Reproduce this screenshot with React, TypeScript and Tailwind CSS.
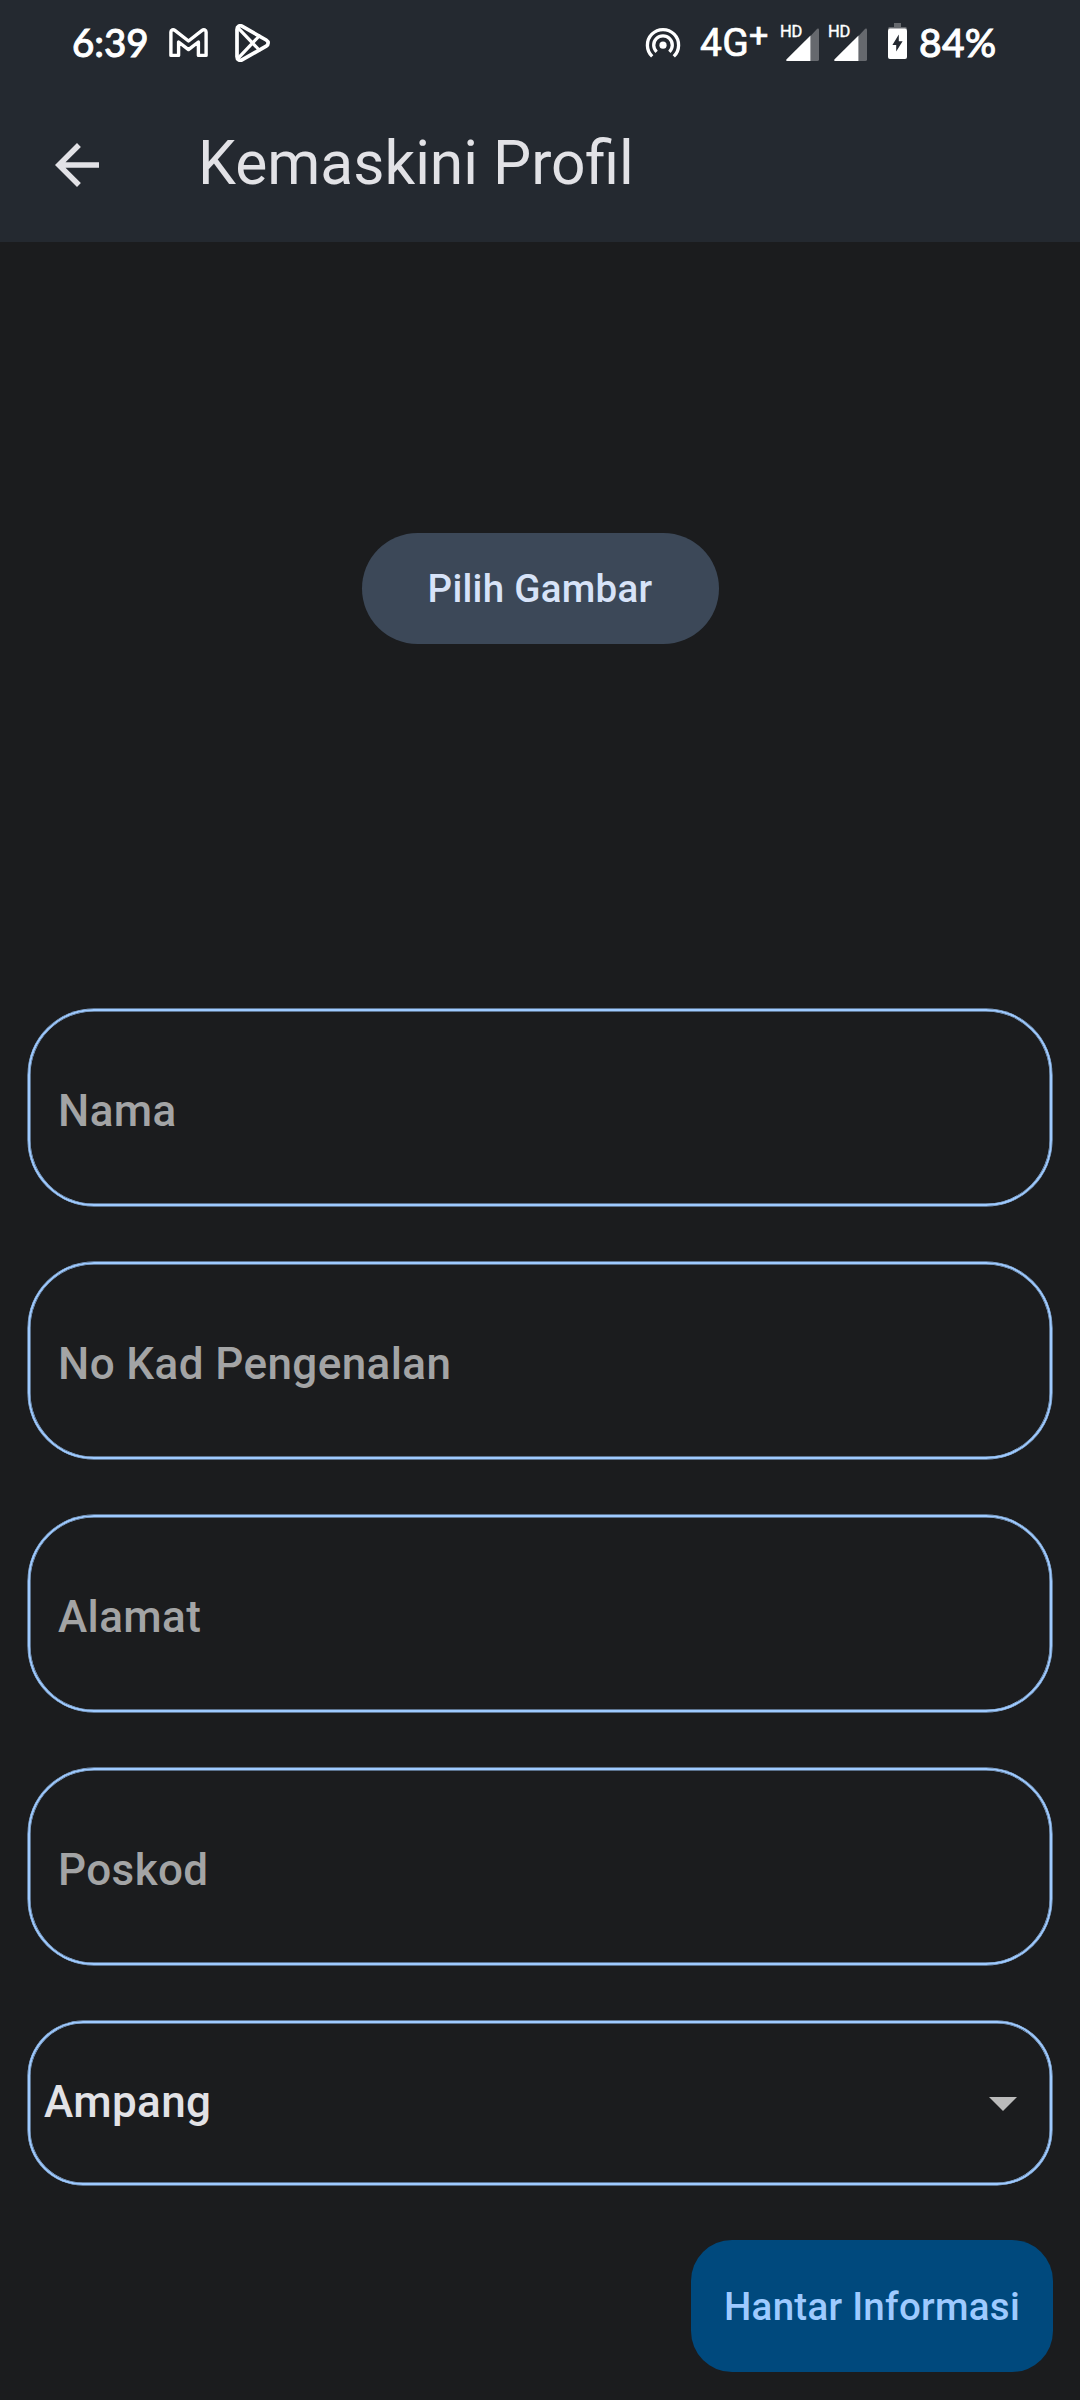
import React from "react";

function GmailIcon() {
  return (
    <svg className="ml-[22px] h-[30px] w-[39px] shrink-0" viewBox="0 0 39 30" fill="none" stroke="#fff" strokeWidth="3.4" strokeLinejoin="round">
      <path d="M1.9 27.4V4C1.9 1.8 4.2 1.1 5.9 2.4L19.5 13 33.1 2.4C34.8 1.1 37.1 1.8 37.1 4V27.4H29.4V14L19.5 21.6 9.6 14V27.4Z" />
    </svg>
  );
}

function PlayIcon() {
  return (
    <svg className="ml-[27px] h-[38px] w-[35px] shrink-0" viewBox="0 0 35 38" fill="none" stroke="#fff" strokeWidth="3.7" strokeLinejoin="round" strokeLinecap="round">
      <path d="M2 5.4C2 2.2 4.7.9 7.4 2.4L31.2 16C33.8 17.6 33.8 20.6 31.2 22.2L7.4 35.7C4.7 37.2 2 35.8 2 32.8Z" />
      <path d="M3 3.8L24.2 26M3 34.4L24.2 12" strokeWidth="3.2" />
    </svg>
  );
}

function HotspotIcon() {
  return (
    <svg className="h-[32px] w-[36px] shrink-0" viewBox="0 0 36 32" fill="none" stroke="#fff" strokeWidth="3.3">
      <path d="M7.2 29.4A15.6 15.6 0 1 1 28.8 29.4" />
      <path d="M11.6 24.9A9.3 9.3 0 1 1 24.4 24.9" />
      <circle cx="18" cy="18.2" r="3.6" fill="#fff" stroke="none" />
    </svg>
  );
}

function Signal() {
  return (
    <div className="relative h-[35px] w-[48px] shrink-0">
      <span className="absolute left-[-1px] top-[-1px] text-[16.5px] leading-[14px] tracking-[-0.3px] [-webkit-text-stroke:0.4px_#fff]">HD</span>
      <svg className="absolute left-[5px] top-[2px] h-[33px] w-[33px]" viewBox="0 0 33 33">
        <path d="M24.5 8L31.2.8Q33 0 33 2V31.4Q33 33 31.4 33H24.5Z" fill="#66696e" />
        <path d="M24.5 7.4V33H1.2Q-.6 32.6.6 31.2Z" fill="#fff" />
      </svg>
    </div>
  );
}

function BatteryIcon() {
  return (
    <svg className="ml-[11px] mt-[-5px] h-[36px] w-[19px] shrink-0" viewBox="0 0 19 36">
      <path d="M6 0h7v4h4.4Q19 4 19 6H0Q0 4 1.6 4H6Z" fill="#66696e" />
      <rect y="5.4" width="19" height="30.6" rx="2" fill="#fff" />
      <path d="M10.8 11.6L4.4 22H8.2V28.6L14.6 18.2H10.8Z" fill="#242930" />
    </svg>
  );
}

function StatusBar() {
  return (
    <div className="flex h-[86px] items-center pl-[72px] pr-[83px] text-white">
      <span className="mt-[-2px] w-[75px] whitespace-nowrap font-[Lato] text-[38.5px] font-medium leading-none [-webkit-text-stroke:0.9px_#fff]">6:39</span>
      <GmailIcon />
      <PlayIcon />
      <div className="ml-auto flex items-center">
        <HotspotIcon />
        <span className="ml-[19px] flex w-[71px] whitespace-nowrap text-[39px] leading-none tracking-[0.3px] [-webkit-text-stroke:0.7px_#fff]">
          4G<span className="mt-[-3px] text-[34px] leading-[28px]">+</span>
        </span>
        <div className="ml-[10px] flex">
          <Signal />
          <Signal />
        </div>
        <BatteryIcon />
        <span className="ml-[12px] mt-[-2px] w-[78px] whitespace-nowrap font-[Lato] text-[39px] font-medium leading-none tracking-[0.3px] [-webkit-text-stroke:0.9px_#fff]">84%</span>
      </div>
    </div>
  );
}

function Field({ label }: { label: string }) {
  return (
    <div className="flex h-[197px] items-center rounded-[66px] border-2 border-[#9ecaff] pl-[28px] pt-[7px] text-[44px] font-medium leading-none tracking-[0.41px] text-[#a3a4a5] shadow-[0_0_0_0.5px_#9ecaff,inset_0_0_0_0.5px_#9ecaff]">
      {label}
    </div>
  );
}

const fields = ["Nama", "No Kad Pengenalan", "Alamat", "Poskod"];

export default function App() {
  return (
    <div className="flex h-[2400px] w-[1080px] flex-col bg-[#1b1c1e] font-[Roboto,sans-serif]">
      <header className="h-[242px] shrink-0 bg-[#242930]">
        <StatusBar />
        <div className="flex h-[156px] items-center pl-[44px] pt-[2px]">
          <svg className="h-[66px] w-[66px]" viewBox="0 0 24 24" fill="#e2e2e6">
            <path d="M20 11H7.83l5.59-5.59L12 4l-8 8 8 8 1.41-1.41L7.83 13H20v-2z" />
          </svg>
          <h1 className="ml-[88px] mt-[-2px] text-[60.5px] leading-none text-[#e2e2e6]">Kemaskini Profil</h1>
        </div>
      </header>
      <section className="mt-[291px] flex h-[111px] shrink-0 justify-center">
        <button className="h-[111px] w-[357px] rounded-full bg-[#3c4858] pt-[2px] text-[38.5px] font-medium leading-none tracking-[0.275px] text-[#d7e3f8]">
          Pilih Gambar
        </button>
      </section>
      <form className="mt-[365px] flex flex-col gap-[56px] px-[28px]">
        {fields.map((label) => (
          <Field key={label} label={label} />
        ))}
        <div className="flex h-[164px] items-center justify-between rounded-[55px] border-2 border-[#9ecaff] pl-[14px] pr-[33px] text-[44px] font-medium leading-none tracking-[0.41px] text-[#e2e2e6] shadow-[0_0_0_0.5px_#9ecaff,inset_0_0_0_0.5px_#9ecaff]">
          <span className="mt-[-2px]">Ampang</span>
          <svg className="mt-[2px] h-[14px] w-[28px]" viewBox="0 0 28 14">
            <path d="M0 0H28L14 14Z" fill="#bbbbbb" />
          </svg>
        </div>
        <button type="button" className="mr-[-1px] mt-[-1px] h-[132px] w-[362px] self-end rounded-[41px] bg-[#00497d] pt-[2px] text-[38.5px] font-medium leading-none tracking-[0.275px] text-[#9ecaff]">
          Hantar Informasi
        </button>
      </form>
    </div>
  );
}
